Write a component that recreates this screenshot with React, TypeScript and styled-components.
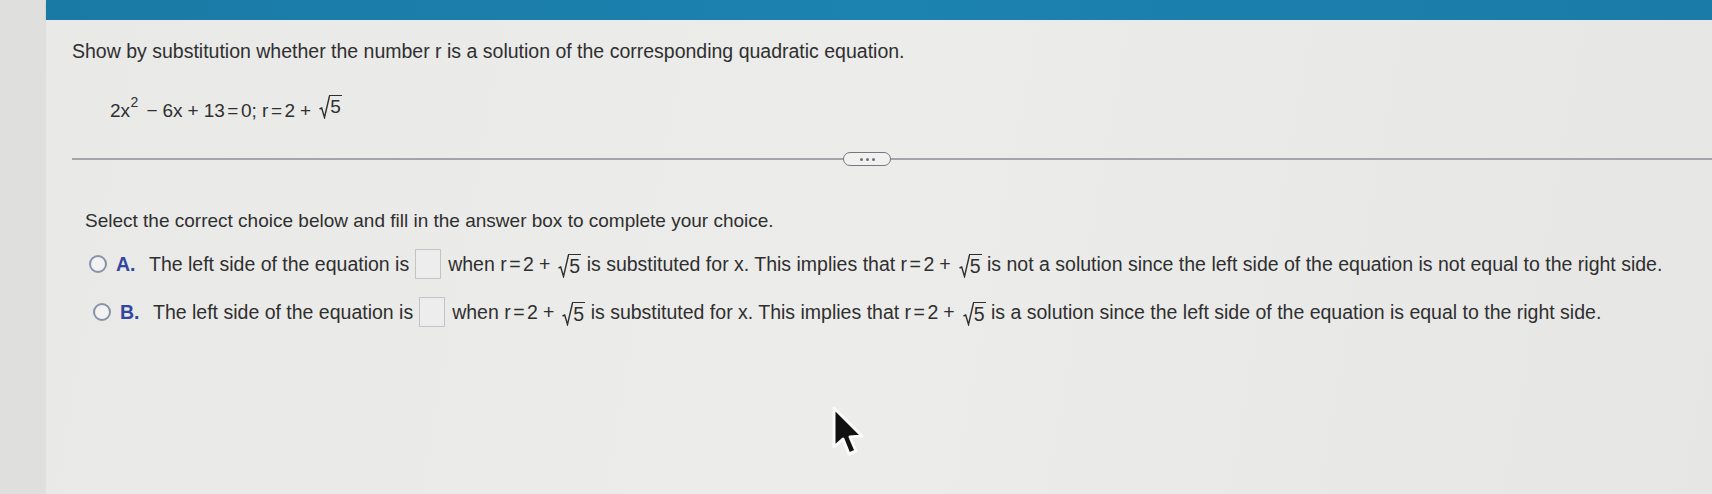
import React from "react";
import styled, { createGlobalStyle } from "styled-components";

const Global = createGlobalStyle`
  html, body { margin: 0; padding: 0; }
  body {
    width: 1712px;
    height: 494px;
    overflow: hidden;
    background: #dfdfde;
    font-family: "Liberation Sans", Arial, sans-serif;
    color: #2f2f30;
  }
`;

const Page = styled.div`
  position: relative;
  width: 1712px;
  height: 494px;
  padding-left: 46px;
  box-sizing: border-box;
  display: flex;
  flex-direction: column;
`;

const Sheet = styled.div`
  flex: 1;
  display: flex;
  flex-direction: column;
  background: linear-gradient(100deg, #e9e9e7 0%, #ececea 50%, #e6e6e4 100%);
`;

const TopBar = styled.div`
  height: 20px;
  background: linear-gradient(90deg, #1a7aa6 0%, #1c82b0 50%, #1a7ba8 100%);
  box-shadow: 0 2px 2px rgba(0, 0, 0, 0.15);
`;

const Content = styled.div`
  display: flex;
  flex-direction: column;
  padding-left: 26px;
`;

const Title = styled.div`
  margin-top: 20px;
  font-size: 19.5px;
  line-height: 22px;
`;

const Equation = styled.div`
  margin-top: 31px;
  margin-left: 38px;
  font-size: 19px;
  line-height: 24px;
  display: flex;
  align-items: baseline;
  white-space: pre;
`;

const Sup = styled.span`
  font-size: 14px;
  position: relative;
  top: -10px;
  margin-left: 0.5px;
  margin-right: 3px;
`;

const Op = styled.span`
  margin: 0 5px;
`;

const TightOp = styled.span`
  margin: 0 2.5px;
`;

const Radical = styled.span`
  display: inline-flex;
  align-items: flex-end;
  margin-left: 3px;
`;

const RadSign = styled.svg`
  width: 11px;
  height: 24px;
  margin-right: -1px;
  position: relative;
  top: 2px;
`;

const RadBody = styled.span`
  border-top: 1.4px solid #2f2f30;
  padding: 1px 1px 0 1px;
  line-height: 20px;
`;

const DividerRow = styled.div`
  margin-top: 27px;
  display: flex;
  align-items: center;
  height: 16px;
`;

const Line = styled.div<{ $grow: number }>`
  flex: ${(p) => p.$grow};
  height: 1.5px;
  background: #a6a4aa;
`;

const Pill = styled.div`
  width: 46px;
  height: 12px;
  border: 1.5px solid #737882;
  border-radius: 8px;
  background: #f1f1f0;
  display: flex;
  align-items: center;
  justify-content: center;
  gap: 3px;
`;

const Dot = styled.span`
  width: 3px;
  height: 3px;
  border-radius: 50%;
  background: #6c7280;
`;

const Prompt = styled.div`
  margin-top: 43px;
  margin-left: 13px;
  font-size: 19px;
  line-height: 22px;
`;

const Options = styled.div`
  margin-top: 17px;
  margin-left: 17px;
  display: flex;
  flex-direction: column;
  gap: 18px;
`;

const OptionRow = styled.div<{ $shift: number }>`
  display: flex;
  align-items: center;
  height: 30px;
  margin-left: ${(p) => p.$shift}px;
  font-size: 19.5px;
  white-space: pre;
`;

const Radio = styled.span`
  width: 14px;
  height: 14px;
  border-radius: 50%;
  border: 2px solid #8a92a8;
  background: #f2f2f2;
  flex: none;
`;

const Letter = styled.span`
  font-weight: bold;
  color: #3246a0;
  margin-left: 9px;
  width: 33px;
`;

const AnswerBox = styled.span`
  display: inline-block;
  width: 24px;
  height: 28px;
  border: 1.5px solid #c3c4c6;
  background: #ededed;
  margin: 0 7px 0 6px;
  flex: none;
`;

const Cursor = styled.svg`
  position: absolute;
  left: 825px;
  top: 404px;
  width: 44px;
  height: 60px;
`;

const Sqrt5: React.FC = () => (
  <Radical>
    <RadSign viewBox="0 0 11 24">
      <path d="M0.5 14 L2.7 13 L5.5 22.5 L10.5 1" fill="none" stroke="#2f2f30" strokeWidth="1.4" />
    </RadSign>
    <RadBody>5</RadBody>
  </Radical>
);

const RValue: React.FC = () => (
  <>
    r<TightOp>=</TightOp>2<Op>+</Op>
    <Sqrt5 />
  </>
);

export default function App() {
  return (
    <>
      <Global />
      <Page>
        <TopBar />
        <Sheet>
          <Content>
            <Title>
              Show by substitution whether the number r is a solution of the corresponding quadratic equation.
            </Title>
            <Equation>
              2x<Sup>2</Sup>
              <Op>−</Op>6x<Op>+</Op>13<TightOp>=</TightOp>0; <RValue />
            </Equation>
            <DividerRow>
              <Line $grow={771} />
              <Pill>
                <Dot />
                <Dot />
                <Dot />
              </Pill>
              <Line $grow={821} />
            </DividerRow>
            <Prompt>Select the correct choice below and fill in the answer box to complete your choice.</Prompt>
            <Options>
              <OptionRow $shift={0}>
                <Radio />
                <Letter>A.</Letter>
                The left side of the equation is
                <AnswerBox />
                when <RValue /> is substituted for x. This implies that <RValue /> is not a solution since the left side of
                the equation is not equal to the right side.
              </OptionRow>
              <OptionRow $shift={4}>
                <Radio />
                <Letter>B.</Letter>
                The left side of the equation is
                <AnswerBox />
                when <RValue /> is substituted for x. This implies that <RValue /> is a solution since the left side of the
                equation is equal to the right side.
              </OptionRow>
            </Options>
          </Content>
        </Sheet>
        <Cursor viewBox="0 0 44 60">
          <path
            d="M9 4 L9 43 L18 35 L24 50 L31 47 L25 33 L37 32 Z"
            fill="#111"
            stroke="#fafafa"
            strokeWidth="3"
            strokeLinejoin="round"
          />
        </Cursor>
      </Page>
    </>
  );
}
